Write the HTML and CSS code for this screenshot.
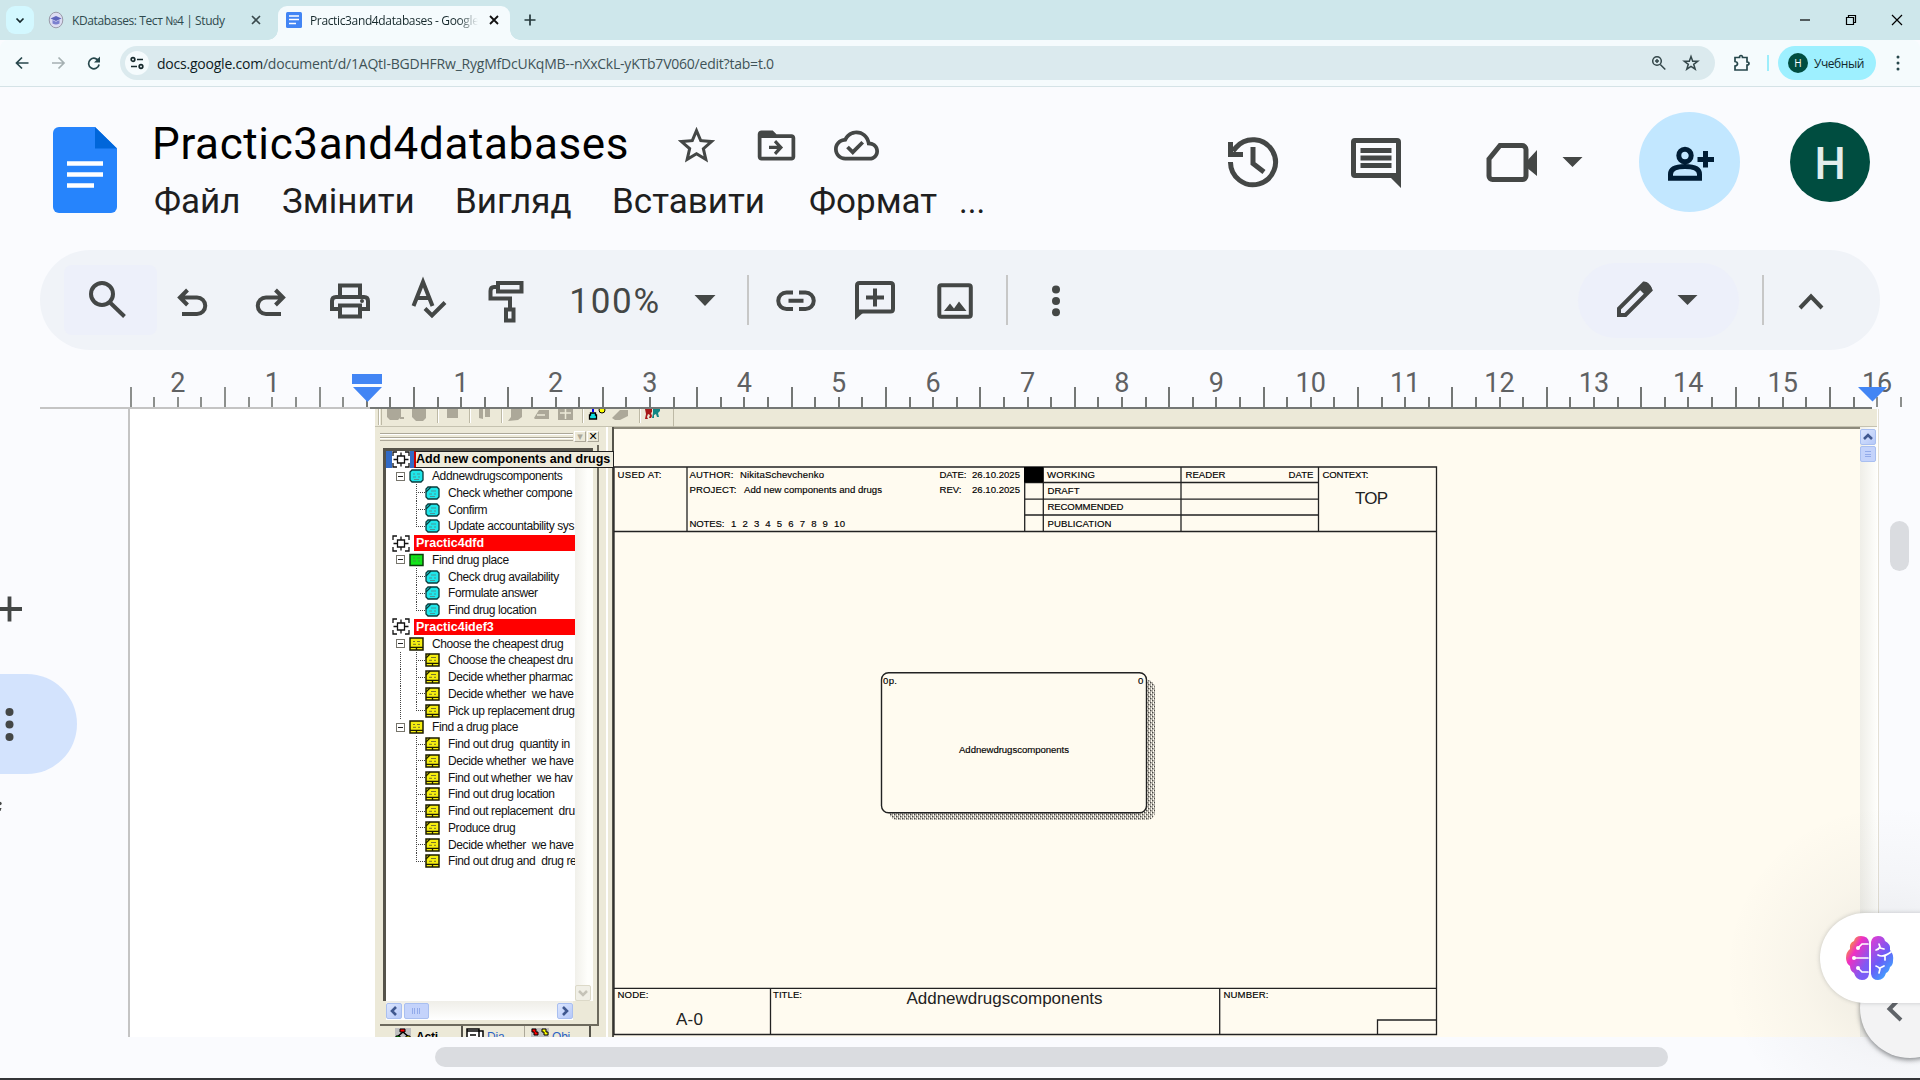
FILE: index.html
```html
<!DOCTYPE html>
<html lang="uk">
<head>
<meta charset="utf-8">
<title>Practic3and4databases - Google Документи</title>
<link rel="stylesheet" href="styles.css">
</head>
<body>
<svg class="defs" width="0" height="0">
  <symbol id="model" viewBox="0 0 18 17"><path d="M1 5V1h4M13 1h4v4M17 12v4h-4M5 16H1v-4" fill="none" stroke="#111" stroke-width="1.3"/><path d="M5.500 5h7v7h-7zM9 1.500V5M9 12v3.500M1.500 8.500h4M12.500 8.500h4" fill="#fff" stroke="#111" stroke-width="1.300"/></symbol>
  <symbol id="cyan" viewBox="0 0 15 14"><path d="M3 1h9l2 2v8l-2 2H3l-2-2V3z" fill="#1fe6ea" stroke="#0a3b3c" stroke-width="1.300"/><path d="M4 5h2M8 5h3M4 8h3M9 8h2M5 10.500h5" stroke="#4a9698" stroke-width="1"/></symbol>
  <symbol id="cyanleaf" viewBox="0 0 15 14"><path d="M3 1h9l2 2v8l-2 2H3l-2-2V3z" fill="#1fe6ea" stroke="#0a3b3c" stroke-width="1.300"/><path d="M1 6l5-5" stroke="#0a3b3c" stroke-width="1.200"/><path d="M6 5h5M4 8h3M9 8h2M5 10.500h5" stroke="#4a9698" stroke-width="1"/></symbol>
  <symbol id="green" viewBox="0 0 15 14"><path d="M1 1.500h13v11H1z" fill="#13e51a" stroke="#0b3b0b" stroke-width="1.500"/><path d="M4 5h2M8 5h3M4 8h3M9 8h2" stroke="#3c9a3c"/></symbol>
  <symbol id="yellow" viewBox="0 0 15 14"><path d="M1 1h13v12H1z" fill="#f5ee10" stroke="#1c1c00" stroke-width="1.500"/><path d="M1 10.300h13M7.500 10v3" stroke="#1c1c00" stroke-width="1.300"/><path d="M4 4.500h2M8 4.500h3M4 7.300h3M9 7.300h2" stroke="#77742c"/></symbol>
  <symbol id="yellowleaf" viewBox="0 0 15 14"><path d="M1 1h13v12H1z" fill="#f5ee10" stroke="#1c1c00" stroke-width="1.500"/><path d="M1 10.300h13M7.500 10v3M1 5l4-4" stroke="#1c1c00" stroke-width="1.300"/><path d="M6 4.500h5M4 7.300h3M9 7.300h2" stroke="#77742c"/></symbol>
</svg>

<div class="tabstrip">
  <div class="tabsearch"><svg width="28" height="28" viewBox="0 0 28 28"><path d="M10.500 12.500l3.500 3.500 3.500-3.500" class="s2 dark"/></svg></div>
  <div class="tab idle">
    <svg width="16" height="18" viewBox="0 0 16 18"><ellipse cx="8" cy="9" rx="6.800" ry="7.800" fill="#dcdcf2" stroke="#9a9aa8"/><path d="M2.500 7.500L8 5l5.500 2.500L8 10z" fill="#5d63bb"/><path d="M4.500 9v3.500q3.500 2 7 0V9L8 10.800z" fill="#7b80cf"/></svg>
    <span class="tabname">KDatabases: Тест №4 | Study</span>
    <svg class="x" width="10" height="10" viewBox="0 0 10 10"><path d="M1 1l8 8M9 1L1 9" stroke="#3a4a4d" stroke-width="1.600"/></svg>
  </div>
  <div class="tab active">
    <svg width="16" height="16" viewBox="0 0 16 16"><rect width="16" height="16" rx="1.500" fill="#4285f4"/><path d="M3 4h10M3 7.500h10M3 11.500h7" stroke="#fff" stroke-width="1.700"/></svg>
    <span class="tabname">Practic3and4databases - Google</span>
    <svg class="x" width="10" height="10" viewBox="0 0 10 10"><path d="M1 1l8 8M9 1L1 9" stroke="#111" stroke-width="1.800"/></svg>
  </div>
  <svg class="newtab" width="12" height="12" viewBox="0 0 12 12"><path d="M6 .5v11M.5 6h11" stroke="#25383b" stroke-width="1.700"/></svg>
  <div class="wincontrols">
    <svg width="12" height="12" viewBox="0 0 12 12"><path d="M1 6h10" stroke="#000" stroke-width="1.200"/></svg>
    <svg width="12" height="12" viewBox="0 0 12 12"><path d="M1.500 3.500h7v7h-7zM3.500 3.500v-2h7v7h-2" fill="none" stroke="#000" stroke-width="1.200"/></svg>
    <svg width="12" height="12" viewBox="0 0 12 12"><path d="M1 1l10 10M11 1L1 11" stroke="#000" stroke-width="1.200"/></svg>
  </div>
</div>

<div class="navbar">
  <svg width="118" height="46" viewBox="0 0 118 46"><g class="s2"><path d="M28.500 23H17M22 17.500L16.500 23l5.500 5.500" stroke="#27474c"/><path d="M52 23h11.500M58.500 17.500L64 23l-5.500 5.500" stroke="#a5b0b2"/><path d="M98.800 21.500a5.300 5.300 0 1 0 .3 3" stroke="#27474c"/></g><path d="M100 16.500v6h-6z" fill="#27474c"/></svg>
  <div class="omnibox">
    <div class="site"><svg width="24" height="24" viewBox="0 0 24 24"><g class="s2 dark"><circle cx="8" cy="8.500" r="1.800"/><path d="M12 8.500h6M6 15.500h6"/><circle cx="16" cy="15.500" r="1.800"/></g></svg></div>
    <span class="url"><b>docs.google.com</b>/document/d/1AQtI-BGDHFRw_RygMfDcUKqMB--nXxCkL-yKTb7V060/edit?tab=t.0</span>
    <svg class="obicons" width="60" height="20" viewBox="0 0 60 20"><g fill="none" stroke="#34474a" stroke-width="1.500"><circle cx="12" cy="8" r="4.300"/><path d="M15.300 11.500l5 5M10 8h4M12 6v4"/><path d="M46 3.500l1.700 4.700 5 .1-4 3 1.500 4.900-4.200-2.900-4.200 2.900 1.500-4.900-4-3 5-.1z"/></g></svg>
  </div>
  <svg class="puzzle" width="20" height="20" viewBox="0 0 20 20"><path d="M3 4.500h4.500q0-2 1.500-2t1.500 2H15v4.500q2 0 2 1.500t-2 1.500v5H3v-4q2.500-.5 2.500-2.300T3 8.500z" fill="none" stroke="#27474c" stroke-width="1.700"/></svg>
  <i class="navline"></i>
  <div class="profile"><span class="mini">Н</span>Учебный</div>
  <svg class="kebab" width="4" height="18" viewBox="0 0 4 18"><g fill="#27474c"><circle cx="2" cy="3" r="1.500"/><circle cx="2" cy="9" r="1.500"/><circle cx="2" cy="15" r="1.500"/></g></svg>
</div>

<header class="header">
  <svg class="logo" width="64" height="86" viewBox="0 0 64 86"><path d="M6 0h36l22 21.500V80a6 6 0 0 1-6 6H6a6 6 0 0 1-6-6V6a6 6 0 0 1 6-6z" fill="#2684fc"/><path d="M42 0l22 21.500H42z" fill="#0066da"/><path d="M14 36.500h36M14 47.500h36M14 58.500h27" stroke="#fff" stroke-width="4.600"/></svg>
  <div class="heading">
    <div class="titlerow">
      <span class="doctitle">Practic3and4databases</span>
      <svg width="45" height="45" viewBox="0 0 24 24"><path fill="#444746" d="M22 9.240l-7.190-.62L12 2 9.190 8.630 2 9.240l5.460 4.730L5.820 21 12 17.270 18.180 21l-1.630-7.030L22 9.240zM12 15.400l-3.760 2.270 1-4.280-3.320-2.880 4.380-.38L12 6.100l1.710 4.040 4.380.38-3.320 2.880 1 4.280L12 15.400z"/></svg>
      <svg width="45" height="45" viewBox="0 0 24 24"><path fill="#444746" d="M20 6h-8l-2-2H4c-1.100 0-2 .9-2 2v12c0 1.100.9 2 2 2h16c1.100 0 2-.9 2-2V8c0-1.100-.9-2-2-2zm0 12H4V8h16v10zm-8.200-1l3.700-4-3.700-4-1.200 1.200 1.700 1.900H8v1.800h4.300l-1.700 1.900z"/></svg>
      <svg width="45" height="45" viewBox="0 0 24 24"><path fill="#444746" d="M19.350 10.040C18.670 6.590 15.640 4 12 4 9.110 4 6.600 5.640 5.350 8.040 2.340 8.360 0 10.910 0 14c0 3.310 2.690 6 6 6h13c2.760 0 5-2.240 5-5 0-2.640-2.050-4.780-4.650-4.960zM19 18H6c-2.210 0-4-1.790-4-4 0-2.050 1.530-3.760 3.560-3.970l1.070-.11.500-.95C8.080 7.140 9.940 6 12 6c2.620 0 4.880 1.860 5.390 4.430l.3 1.500 1.530.11c1.560.1 2.780 1.410 2.780 2.960 0 1.650-1.350 3-3 3zm-9-3.820l-2.090-2.090L6.500 13.500 10 17l6.010-6.010-1.410-1.410z"/></svg>
    </div>
    <nav class="menu"><span>Файл</span><span>Змінити</span><span>Вигляд</span><span>Вставити</span><span>Формат</span><span class="more">...</span></nav>
  </div>
  <div class="actions">
    <svg width="60" height="60" viewBox="-30 -30 60 60"><g fill="none" stroke="#444746" stroke-width="5"><path d="M-22.500 0A22.500 22.500 0 1 0-17-14.500L-20-11"/><path d="M-22.500-20v12.500h12.500" /><path d="M0-15V1.500L11 10"/></g></svg>
    <svg width="60" height="60" viewBox="-30 -30 60 60"><path d="M-21-24H21a4 4 0 0 1 4 4V26L15 16H-21a4 4 0 0 1-4-4V-20a4 4 0 0 1 4-4zM-20-19V11H20V-19z" fill="#444746" fill-rule="evenodd"/><path d="M-15.500-11.500h31M-15.500-4h31M-15.500 3.500h31" stroke="#444746" stroke-width="5"/></svg>
    <svg width="120" height="60" viewBox="-60 -30 120 60"><path d="M-45-3L-34-16.500H-12a4 4 0 0 1 4 4V14a3.500 3.500 0 0 1-3.500 3.500H-41.500A3.500 3.500 0 0 1-45 14z" fill="none" stroke="#444746" stroke-width="5"/><path d="M-8 0L3-12V14L-8 5zM28.500-5h20L38.500 5z" fill="#444746"/></svg>
    <div class="share"><svg width="60" height="60" viewBox="-30 -30 60 60"><g fill="none" stroke="#001d35" stroke-width="5"><circle cx="-5" cy="-6.500" r="6.200"/><path d="M-19.500 16.200v-4q0-7.700 14.500-7.700t14.500 7.700v4z"/><path d="M15.500-11V5.500M7.500-2.500h16.500"/></g></svg></div>
    <div class="avatar">H</div>
  </div>
</header>

<div class="toolbar">
  <div class="cell search"><svg class="ic" viewBox="-25 -25 50 50"><circle cx="-6" cy="-6" r="11" /><path d="M2.500 3L16.500 16.500"/></svg></div>
  <div class="cell"><svg class="ic" viewBox="-25 -25 50 50"><path d="M-4.500-10L-12-2.500-4.500 5M-12-2.500H5a8.200 8.200 0 0 1 0 16.500H-10"/></svg></div>
  <div class="cell"><svg class="ic" viewBox="-25 -25 50 50"><path d="M4.500-10L12-2.500 4.500 5M12-2.500H-5a8.200 8.200 0 0 0 0 16.500H10"/></svg></div>
  <div class="cell"><svg class="ic" viewBox="-25 -25 50 50"><path d="M-10-4V-14.500H10V-4M-10 9H-18V1Q-18-3-14-3H14Q18-3 18 1V9H10M-10 5.500H10V16.500H-10z"/><circle cx="12" cy="1" r="2" class="solid"/></svg></div>
  <div class="cell"><svg class="ic" viewBox="-25 -25 50 50"><path d="M-15.500 6L-6-18 3.500 6M-12-2H0M-4 8.500L3 15.500 16 2.500"/></svg></div>
  <div class="cell"><svg class="ic" viewBox="-25 -25 50 50"><path d="M-8-17H15.500V-8.500H-8zM-9-13H-12Q-15.500-13-15.500-9V-1.500H4V9M0 9.500H7.500V20.500H0z"/></svg></div>
  <div class="cell zoom">100%</div>
  <div class="cell"><svg class="ic" viewBox="-25 -25 50 50"><path class="solid" d="M-10.500-5h21L0 6z"/></svg></div>
  <div class="cell"><i class="sep"></i></div>
  <div class="cell"><svg class="ic" viewBox="-25 -25 50 50"><path d="M-3-7.500H-9.500a8 8 0 0 0 0 16.500H-3M3-7.500H9.500a8 8 0 0 1 0 16.500H3M-7.500.8H7.500"/></svg></div>
  <div class="cell"><svg class="ic" viewBox="-25 -25 50 50"><path d="M-18 15V-14.500Q-18-17-15.500-17H15.500Q18-17 18-14.500V9Q18 11.500 15.500 11.500H-17M0-11.500V6.500M-9-2.500H9"/><path class="solid" d="M-20 10v10l9-8z"/></svg></div>
  <div class="cell"><svg class="ic" viewBox="-25 -25 50 50"><rect x="-15.700" y="-14.700" width="31.500" height="31.500" rx="2"/><path class="solid" d="M-11 11l6-7.500 4 5 5-7 7.500 9.500z"/></svg></div>
  <div class="cell"><i class="sep"></i></div>
  <div class="cell"><svg class="ic" viewBox="-25 -25 50 50"><g class="solid"><circle cy="-10.500" r="4"/><circle cy="1" r="4"/><circle cy="12.300" r="4"/></g></svg></div>
  <span></span>
  <div class="cell mode"><svg width="161" height="50" viewBox="1578 275 161 50"><path d="M1619 315v-6.500l25-25q3.500 0 6.500 6.500l-25 25zM1640 287l7 7" fill="none" stroke="#444746" stroke-width="4"/><path d="M1638.500 288l6-5.500q2-1 4 1l2.500 3q1.500 2 0 3.500l-5 5.500z" fill="#444746"/><path d="M1677.500 295h20l-10 10z" fill="#444746"/></svg></div>
  <div class="cell"><i class="sep"></i></div>
  <div class="cell"><svg class="ic" viewBox="-25 -25 50 50"><path d="M-11 8L0-3.500 11 8"/></svg></div>
</div>

<svg class="ruler" id="ruler" width="1920" height="59" viewBox="0 350 1920 59"></svg>

<main class="workspace">
  <aside class="outline">
    <svg width="128" height="628" viewBox="0 409 128 628"><path d="M-5 609h27M9.500 596.500v25" stroke="#444746" stroke-width="3.800"/><path d="M-10 674H27a50 50 0 0 1 0 100H-10z" fill="#d3e3fd"/><g fill="#444746"><circle cx="9.500" cy="712" r="4"/><circle cx="9.500" cy="724.500" r="4"/><circle cx="9.500" cy="737" r="4"/><circle cx="0" cy="803.500" r="1.700"/><path d="M-1 808h2.500l-1 3h-2z"/></g></svg>
  </aside>
  <section class="page">
    <div class="figure">
      <div class="xptools">
        <svg width="1502" height="18" viewBox="375 409 1502 18"><g fill="#aca899"><path d="M387 409h14v8l-3 3h-8l-3-3zM400 417h4v2h-4zM412 409h14v9l-3 3h-7l-4-4zM447 409h11v9h-11zM479 409h4v10l-4-1zM485 409h5v8h-5zM511 409h11v8l-4 3-10 1 3-4zM534 418l5-8h10v9h-14zM558 409h15v11h-15zM612 418l8-8h8v6l-8 4h-5z"/></g><path d="M560 413h11M565.500 409v10M537 415h8" stroke="#ece9d8" stroke-width="1.500"/><path d="M378.500 409v16M381.500 409v16M437.500 409v14M469.500 409v14M501.500 409v14M582.500 409v14M639.500 409v14M673.500 409v18" stroke="#bdb9a5"/><path d="M379.500 409v16M438.500 409v14M470.500 409v14M502.500 409v14M583.500 409v14M640.500 409v14" stroke="#fff"/><path d="M592 409h2v3h-2z" fill="#00f"/><path d="M590.500 413h5v2h1v4h-7v-4h1z" fill="#13dfe2" stroke="#000" stroke-width="1.300"/><circle cx="602" cy="410" r="3" fill="#ff0" stroke="#000"/><path d="M645 409h7v3l-1 1 1 3-1 2h-2l1-3-2-1-1 3 1 2h-3l1-5z" fill="#a81818"/><path d="M653 409h7v2l-2 2 1 4h-2l-1-3-2 1v3h-2l1-5z" fill="#138584"/></svg>
      </div>
      <div class="xpbody">
        <div class="dock">
          <div class="grip"><span class="lines"></span><span class="gbtn dim">▾</span><span class="gbtn">✕</span></div>
          <div class="treebox">
            <div class="treeview">
              <div class="tree">
                <div class="row l0 sel"><svg class="m"><use href="#model"/></svg></div>
                <div class="row l1"><i class="ex"></i><svg><use href="#cyan"/></svg><span>Addnewdrugscomponents</span></div>
                <div class="row l2"><i class="g"></i><svg><use href="#cyanleaf"/></svg><span>Check whether compone</span></div>
                <div class="row l2"><i class="g"></i><svg><use href="#cyanleaf"/></svg><span>Confirm</span></div>
                <div class="row l2"><i class="g end"></i><svg><use href="#cyanleaf"/></svg><span>Update accountability sys</span></div>
                <div class="row l0"><svg class="m"><use href="#model"/></svg><b>Practic4dfd</b></div>
                <div class="row l1"><i class="ex"></i><svg><use href="#green"/></svg><span>Find drug place</span></div>
                <div class="row l2"><i class="g"></i><svg><use href="#cyanleaf"/></svg><span>Check drug availability</span></div>
                <div class="row l2"><i class="g"></i><svg><use href="#cyanleaf"/></svg><span>Formulate answer</span></div>
                <div class="row l2"><i class="g end"></i><svg><use href="#cyanleaf"/></svg><span>Find drug location</span></div>
                <div class="row l0"><svg class="m"><use href="#model"/></svg><b>Practic4idef3</b></div>
                <div class="row l1"><i class="ex"></i><svg><use href="#yellow"/></svg><span>Choose the cheapest drug</span></div>
                <div class="row l2 trunk"><i class="g"></i><svg><use href="#yellowleaf"/></svg><span>Choose the cheapest dru</span></div>
                <div class="row l2 trunk"><i class="g"></i><svg><use href="#yellowleaf"/></svg><span>Decide whether pharmac</span></div>
                <div class="row l2 trunk"><i class="g"></i><svg><use href="#yellowleaf"/></svg><span>Decide whether&nbsp; we have</span></div>
                <div class="row l2 trunk"><i class="g end"></i><svg><use href="#yellowleaf"/></svg><span>Pick up replacement drug</span></div>
                <div class="row l1"><i class="ex"></i><svg><use href="#yellow"/></svg><span>Find a drug place</span></div>
                <div class="row l2"><i class="g"></i><svg><use href="#yellowleaf"/></svg><span>Find out drug&nbsp; quantity in</span></div>
                <div class="row l2"><i class="g"></i><svg><use href="#yellowleaf"/></svg><span>Decide whether&nbsp; we have</span></div>
                <div class="row l2"><i class="g"></i><svg><use href="#yellowleaf"/></svg><span>Find out whether&nbsp; we hav</span></div>
                <div class="row l2"><i class="g"></i><svg><use href="#yellowleaf"/></svg><span>Find out drug location</span></div>
                <div class="row l2"><i class="g"></i><svg><use href="#yellowleaf"/></svg><span>Find out replacement&nbsp; dru</span></div>
                <div class="row l2"><i class="g"></i><svg><use href="#yellowleaf"/></svg><span>Produce drug</span></div>
                <div class="row l2"><i class="g"></i><svg><use href="#yellowleaf"/></svg><span>Decide whether&nbsp; we have</span></div>
                <div class="row l2"><i class="g end"></i><svg><use href="#yellowleaf"/></svg><span>Find out drug and&nbsp; drug re</span></div>
              </div>
              <div class="vscroll"><span class="sbtn off"><svg width="14" height="14" viewBox="0 0 14 14"><path d="M3 5l4 4 4-4" fill="none" stroke="#c5c3b8" stroke-width="2.500"/></svg></span></div>
            </div>
            <div class="hscroll">
              <span class="sbtn"><svg width="14" height="14" viewBox="0 0 14 14"><path d="M9 3L5 7l4 4" class="chev"/></svg></span>
              <span class="hthumb"></span>
              <span class="sbtn right"><svg width="14" height="14" viewBox="0 0 14 14"><path d="M5 3l4 4-4 4" class="chev"/></svg></span>
            </div>
          </div>
          <div class="docktabs">
            <div class="dtab on"><svg width="18" height="11" viewBox="0 0 18 11"><path d="M0 0h16v11H0z" fill="#c0c0c0"/><path d="M8 4L2 9M8 4l6 5" stroke="#000" stroke-width="1.500"/><path d="M5 1h5v3H5z" fill="#f00" stroke="#000"/><path d="M1 8h4v3H1z" fill="#0d0" stroke="#000"/><path d="M11 8h4v3h-4z" fill="#ff0" stroke="#000"/></svg>Acti</div>
            <div class="dtab"><svg width="18" height="11" viewBox="0 0 18 11"><path d="M1 1h12v10H1zM13 3h4v7h-4M1 3h12M4 7h6" fill="#fff" stroke="#000" stroke-width="1.500"/></svg>Dia</div>
            <div class="dtab"><svg width="18" height="11" viewBox="0 0 18 11"><path d="M0 0h18v9H0z" fill="#c0c0c0"/><path d="M1 1h4v3h2v3H3V4H1z" fill="#f00" stroke="#000"/><path d="M11 1h4v3h2v3h-4V4h-2z" fill="#ff0" stroke="#000"/></svg>Obj</div>
          </div>
          <div class="tip">Add new components and drugs</div>
        </div>
        <svg class="diagram" width="1248" height="610" viewBox="612 427 1248 610">
          <defs><pattern id="dither" width="4" height="4" patternUnits="userSpaceOnUse"><rect width="4" height="4" fill="#fffbf0"/><path d="M0 0h1.500v1.500H0zM2 2h1.500v1.500H2zM2 .5h1v1H2zM0 2.500h1v1H0z" fill="#4a4844"/></pattern></defs>
          <rect x="612" y="427" width="1248" height="610" fill="#fffbf0"/>
          <path d="M612 428h1248" stroke="#8d8a7c" stroke-width="2"/><path d="M613 427v610" stroke="#55534a" stroke-width="2"/>
          <g fill="none" stroke="#222" stroke-width="1.300">
            <path d="M614 467H1436.500V1034.500H614zM614 531.500H1436.500M687 467V531.500M1024.700 467V531.500M1043.300 467V531.500M1181 467V531.500M1318.500 467V531.500M1024.700 482.500H1318.500M1024.700 499.200H1318.500M1024.700 515H1318.500M614 988.300H1436.500M770.500 988.300V1034.500M1219.700 988.300V1034.500M1377.500 1034.500V1020H1436.500"/>
          </g>
          <rect x="1024" y="467" width="19" height="15.500"/>
          <rect x="889" y="680" width="266" height="140" rx="8" fill="url(#dither)"/>
          <rect x="881.500" y="672.800" width="265" height="140" rx="7" fill="#fffbf0" stroke="#222" stroke-width="1.400"/>
          <g class="dt">
            <text x="617.500" y="478" textLength="44">USED AT:</text>
            <text x="689.500" y="478" textLength="44">AUTHOR:</text><text x="740" y="478" textLength="84">NikitaSchevchenko</text>
            <text x="689.500" y="492.700" textLength="47">PROJECT:</text><text x="744" y="492.700" textLength="138">Add new components and drugs</text>
            <text x="689.500" y="527" textLength="35">NOTES:</text><text x="731" y="527" textLength="114" xml:space="preserve">1  2  3  4  5  6  7  8  9  10</text>
            <text x="939.500" y="478" textLength="27">DATE:</text><text x="972" y="478" textLength="48">26.10.2025</text>
            <text x="939.500" y="492.700" textLength="22">REV:</text><text x="972" y="492.700" textLength="48">26.10.2025</text>
            <text x="1047" y="478" textLength="48">WORKING</text><text x="1047.500" y="493.500" textLength="32">DRAFT</text><text x="1047.500" y="510" textLength="76">RECOMMENDED</text><text x="1047.500" y="527" textLength="64">PUBLICATION</text>
            <text x="1185.500" y="478" textLength="40">READER</text><text x="1288.500" y="478" textLength="25">DATE</text><text x="1322.500" y="478" textLength="46">CONTEXT:</text>
            <text x="617.500" y="997.500" textLength="31">NODE:</text><text x="773" y="997.500" textLength="29">TITLE:</text><text x="1223.500" y="997.500" textLength="45">NUMBER:</text>
            <text x="883" y="684" textLength="14">0p.</text><text x="1138" y="684">0</text>
            <text x="959" y="752.500" textLength="110">Addnewdrugscomponents</text>
          </g>
          <g class="big"><text x="1355" y="504" textLength="33">TOP</text><text x="676" y="1024.500" textLength="27">A-0</text><text x="906.500" y="1003.500" textLength="196">Addnewdrugscomponents</text></g>
        </svg>
        <div class="mainscroll">
          <span class="sbtn"><svg width="14" height="14" viewBox="0 0 14 14"><path d="M3 9l4-4 4 4" class="chev"/></svg></span>
          <span class="sbtn lines3"></span>
        </div>
      </div>
    </div>
  </section>
  <div class="gutter"><span class="thumb"></span></div>
</main>
<footer class="bottom"><span class="hbar"></span></footer>

<div class="haze"></div>
<div class="sidetoggle"><svg width="60" height="100" viewBox="1860 960 60 100"><path d="M1901 999l-11.500 12 11.500 11" fill="none" stroke="#5f6368" stroke-width="4"/></svg></div>
<div class="assistant">
  <svg width="48" height="46" viewBox="0 0 48 46">
    <defs><linearGradient id="bl" x1="0" y1="0" x2=".9" y2="1"><stop offset=".12" stop-color="#f9a825"/><stop offset=".38" stop-color="#f02fc2"/><stop offset=".8" stop-color="#7b5cf5"/></linearGradient><linearGradient id="br" x1=".2" y1="0" x2=".8" y2="1"><stop offset="0" stop-color="#d63fd6"/><stop offset=".5" stop-color="#6a5cf8"/><stop offset="1" stop-color="#35b4ff"/></linearGradient></defs>
    <path d="M23 7Q22 1 15 1 9 1 8 6 3 8 4 14 0 17 0 23 0 28 4 31 4 36 8 38 10 45 16 45 22 45 23 39z" fill="url(#bl)"/>
    <path d="M25 7Q26 1 32 1 38 1 39 6 45 9 44 15 48 19 47 26 47 30 44 32 43 37 40 38 38 45 32 45 26 45 25 39z" fill="url(#br)"/>
    <g fill="none" stroke="#fff" stroke-width="1.700" stroke-linecap="round"><path d="M22 9h-6l-4 4M22 23H8M22 37h-6l-4-4M30 15q3-1 4-3l-1-3M34 13l4 1M32 20q5 3 13-3M39 21v4M30 31q3 1 4 3l-1 4M34 33l4-2"/></g>
    <g fill="#fff"><circle cx="12" cy="13" r="2"/><circle cx="8" cy="23" r="2"/><circle cx="12" cy="33" r="2"/></g>
  </svg>
</div>
<script src="ruler.js"></script>
</body>
</html>
```

FILE: styles.css
```css
* { box-sizing: border-box; }
html, body { margin: 0; width: 1920px; height: 1080px; overflow: hidden; }
body { display: flex; flex-direction: column; background: #fafbfe; font-family: Roboto, "Liberation Sans", sans-serif; position: relative; }
svg { display: block; flex: none; }
.defs { position: absolute; }
.s2 { fill: none; stroke-width: 1.7; }
.dark { stroke: #16292c; }

/* browser chrome */
.tabstrip { height: 40px; flex: none; display: flex; background: #cee7eb; padding: 6px 0 0 6px; font-family: "Open Sans", "Noto Sans", sans-serif; font-size: 12px; }
.tabsearch { width: 28px; height: 28px; border-radius: 9px; background: #d3f8ff; }
.tab { display: flex; align-items: center; height: 28px; }
.tab .tabname { white-space: nowrap; overflow: hidden; }
.idle { padding-left: 14px; width: 244px; color: #2f4a4e; }
.idle .tabname { width: 179px; margin-left: 8px; letter-spacing: -.4px; }
.active { width: 232px; height: 34px; padding: 0 0 6px 8px; background: #f5fbfd; border-radius: 9px 9px 0 0; color: #16292c; position: relative; }
.active::before, .active::after { content: ""; position: absolute; bottom: 0; width: 10px; height: 10px; }
.active::before { left: -10px; background: radial-gradient(circle at 0 0, transparent 9.5px, #f5fbfd 10px); }
.active::after { right: -10px; background: radial-gradient(circle at 100% 0, transparent 9.5px, #f5fbfd 10px); }
.active .tabname { width: 169px; margin: 0 10px 0 8px; letter-spacing: -.36px; -webkit-mask: linear-gradient(90deg, #000 148px, transparent 168px); mask: linear-gradient(90deg, #000 148px, transparent 168px); }
.newtab { margin: 8px 0 0 14px; }
.wincontrols { display: flex; gap: 34px; margin: 8px 17px 0 auto; }

.navbar { height: 47px; flex: none; display: flex; align-items: flex-start; background: #f5fbfd; border-bottom: 1px solid #d5e3e7; border-radius: 8px 8px 0 0; }
.omnibox { margin: 6px 0 0 2px; width: 1595px; height: 34px; border-radius: 17px; background: #dbeaee; display: flex; align-items: center; padding-left: 5px; font-family: "Open Sans", "Noto Sans", sans-serif; }
.site { width: 24px; height: 24px; border-radius: 50%; background: #f5fbfd; }
.url { margin-left: 8px; font-size: 14px; letter-spacing: -.22px; color: #3f5357; white-space: nowrap; }
.url b { font-weight: 400; color: #0d1b1e; }
.obicons { margin: 0 10px 0 auto; }
.puzzle { margin: 13px 0 0 17px; }
.navline { width: 2px; height: 16px; margin: 15px 0 0 15px; background: #9eeefb; }
.profile { margin: 6px 0 0 9px; width: 98px; height: 34px; border-radius: 17px; background: #9ef0ff; display: flex; align-items: center; font: 12px "Open Sans", sans-serif; letter-spacing: -.45px; color: #10292e; padding-left: 10px; }
.mini { width: 20px; height: 20px; border-radius: 50%; background: #004d40; color: #fff; font-size: 10px; display: grid; place-items: center; margin-right: 6px; letter-spacing: 0; }
.kebab { margin: 14px 0 0 20px; }

/* document header */
.header { height: 163px; flex: none; display: flex; padding-left: 53px; }
.logo { margin-top: 40px; }
.heading { width: 1083px; padding: 31px 0 0 37px; }
.titlerow { display: flex; align-items: flex-start; height: 62px; }
.doctitle { width: 522px; margin-left: -2px; font-size: 44px; line-height: 52px; letter-spacing: .63px; color: #000; white-space: nowrap; }
.titlerow svg { margin-top: 4.5px; margin-right: 35px; }
.menu { display: grid; grid-template-columns: 128px 173px 157px 197px 150px auto; font-size: 35px; line-height: 44px; color: #1f1f1f; white-space: nowrap; justify-content: start; }
.menu .more { font-size: 33px; line-height: 43px; }
.actions { display: grid; grid-template-columns: 106px 139px 177px 135px 146px; height: 150px; align-items: center; justify-items: center; }
.share { width: 101px; height: 100px; border-radius: 50%; background: #c2e7ff; display: grid; place-items: center; }
.avatar { width: 80px; height: 80px; border-radius: 50%; background: #004d40; color: #e3eeec; font-size: 44px; font-weight: 500; padding-top: 3px; display: grid; place-items: center; }

.toolbar { height: 100px; flex: none; width: 1840px; margin-left: 40px; padding-left: 24px; border-radius: 50px; background: #f0f3f8; display: grid; grid-template-columns: 93px 70px 88px 70px 88px 65px 154px 25px 62px 34px 124px 35px 70px 28px 1fr 161px 48px 48px 45px; align-items: center; }
.cell { display: flex; justify-content: center; align-items: center; }
.ic { width: 50px; height: 50px; fill: none; stroke: #444746; stroke-width: 4; }
.ic .solid { fill: #444746; stroke: none; }
.search { height: 70px; background: #edf0fa; border-radius: 8px; padding-right: 5px; }
.zoom { font-size: 35px; color: #444746; letter-spacing: 1.7px; padding-top: 3px; }
.sep { width: 2px; height: 50px; background: #c7c7c7; }
.mode { height: 75px; border-radius: 38px; background: #edf0fa; }
.ruler { font: 27px Roboto, sans-serif; }

/* document canvas */
.workspace { height: 628px; flex: none; display: flex; }
.outline { width: 128px; }
.page { width: 1751px; border-left: 2px solid #c4c4c4; border-right: 1px solid #e4e0d4; background: #fff; padding-left: 245px; }
.gutter { width: 41px; padding: 112px 0 0 11px; }
.thumb { display: block; width: 19px; height: 50px; border-radius: 10px; background: #dadce0; }
.bottom { height: 43px; flex: none; border-bottom: 2px solid #343538; padding: 10px 0 0 435px; }
.hbar { display: block; width: 1233px; height: 20px; border-radius: 10px; background: #dadce0; }

/* embedded modelling tool */
.figure { width: 1502px; height: 628px; overflow: hidden; background: #ece9d8; display: flex; flex-direction: column; }
.xptools { height: 18px; border-bottom: 1px solid #c5c2b0; }
.xpbody { height: 610px; display: flex; }
.dock { width: 237px; flex: none; padding: 4px 0 0 5px; position: relative; background: linear-gradient(90deg, #ece9d8 231px, #fff 231px 233px, #ece9d8 233px); }
.grip { height: 13px; display: flex; align-items: flex-start; gap: 1px; }
.lines { width: 193px; height: 8px; margin-top: 2px; border: solid #aca899; border-width: 1px 0; background: linear-gradient(#fff 1px, transparent 1px 3px, #aca899 3px 4px, #fff 4px 5px, transparent 5px); }
.gbtn { width: 12px; height: 11px; background: #ece9d8; border: 1px solid #aca899; border-top-color: #fff; border-left-color: #fff; font: bold 11px/9px "DejaVu Sans", sans-serif; text-align: center; display: grid; place-items: center; }
.gbtn.dim { color: #aca899; }
.treebox { width: 219px; height: 581px; margin-top: 1px; border: solid #6d6a5e; border-width: 0 2px 2px 0; padding: 3px 4px 3px 3px; }
.treeview { height: 553px; display: flex; border: solid #55534a; border-width: 3px 0 0 3px; }
.tree { width: 189px; flex: none; height: 550px; background: #fff; overflow: hidden; }
.row { height: 16.75px; display: flex; align-items: center; font: 12px/16px "Liberation Sans", Arial, sans-serif; letter-spacing: -.4px; color: #111; white-space: nowrap; }
.row > * { flex: none; }
.row svg { width: 15px; height: 14px; }
.row svg.m { width: 18px; height: 17px; }
.l0 { padding-left: 6px; }
.l0 .m + b { flex: 1; margin-left: 4px; padding-left: 2px; background: #f00; color: #fff; font-size: 12.5px; letter-spacing: 0; }
.sel { background: linear-gradient(90deg, #316ac5 6px, #fff 6px 24px, #316ac5 24px 28px, #fff 28px); }
.l1 { padding-left: 10px; }
.l1 span, .l2 span { margin-left: 8px; }
.ex { width: 9px; height: 9px; margin-right: 4px; border: 1px solid #77756c; background: linear-gradient(#fff 3px, #222 3px 4px, #fff 4px); background-clip: content-box; padding: 0 1px; }
.l2 { padding-left: 30px; }
.g { width: 9px; height: 17px; background: repeating-linear-gradient(90deg, #444 0 1px, transparent 1px 2px) 0 8px / 100% 1px no-repeat, repeating-linear-gradient(#444 0 1px, transparent 1px 2px) 0 0 / 1px 100% no-repeat; }
.g.end { align-self: flex-start; height: 9px; }
.l2 .g.end { background: repeating-linear-gradient(90deg, #444 0 1px, transparent 1px 2px) 0 8px / 100% 1px no-repeat, repeating-linear-gradient(#444 0 1px, transparent 1px 2px) 0 0 / 1px 100% no-repeat; }
.trunk { background: repeating-linear-gradient(#444 0 1px, transparent 1px 2px) 14px 0 / 1px 100% no-repeat; }
.vscroll { width: 18px; flex: none; background: linear-gradient(90deg, #f1f0ea, #fefefb 70%); display: flex; align-items: flex-end; }
.sbtn { width: 16px; height: 16px; border-radius: 2px; background: linear-gradient(135deg, #dce6fe, #b5c8f8); border: 1px solid #a9bff0; display: grid; place-items: center; overflow: hidden; flex: none; }
.sbtn.off { background: #f0efe6; border-color: #dcd9c8; }
.chev { fill: none; stroke: #40588f; stroke-width: 2.6; }
.hscroll { height: 19px; width: 187px; margin-left: 3px; padding: 2px 0 1px; background: linear-gradient(#efeee8, #fff); display: flex; }
.hthumb { width: 25px; height: 16px; margin-left: 2px; border-radius: 2px; border: 1px solid #a9bff0; background: repeating-linear-gradient(90deg, #93abea 0 1px, transparent 1px 2.5px) 7px 4px / 9px 6px no-repeat, #c4d3fb; }
.right { margin-left: auto; }
.docktabs { display: flex; height: 14px; padding-left: 10px; font: 12px/18px "Liberation Sans", sans-serif; color: #2a62c4; }
.dtab { width: 62px; height: 30px; padding: 2px 0 0 3px; display: flex; gap: 3px; border-right: 1px solid #aca899; white-space: nowrap; letter-spacing: -.2px; }
.dtab:last-child { border-right: 2px solid #55534a; width: 66px; padding-left: 6px; }
.dtab.on { width: 73px; color: #000; font-weight: bold; border-right: 2px solid #55534a; padding-left: 5px; }
.tip { position: absolute; left: 39px; top: 24px; width: 200px; height: 17px; border: 1px solid #222; border-left: 2px solid #c00; background: #eeebdc; font: bold 12.5px/15px "Liberation Sans", sans-serif; letter-spacing: .02px; white-space: nowrap; z-index: 2; }
.dt { font: 9.6px "Liberation Sans", sans-serif; fill: #000; stroke: #000; stroke-width: .15px; }
.big { font: 17px "Liberation Sans", sans-serif; fill: #222; }
.mainscroll { width: 17px; background: linear-gradient(90deg, #efeee8, #fefefb); padding-top: 2px; display: flex; flex-direction: column; gap: 1px; }
.lines3 { background: repeating-linear-gradient(#93abea 0 1px, transparent 1px 2.5px) 4px 4px / 6px 7px no-repeat, #c4d3fb; }

/* floating controls */
.haze { position: absolute; right: 0; top: 800px; width: 240px; height: 278px; background: radial-gradient(circle at 210px 170px, rgba(60,64,67,.1), rgba(60,64,67,.03) 90px, transparent 165px); }
.sidetoggle { position: absolute; left: 1860px; top: 958px; width: 100px; height: 100px; border-radius: 50px; background: #f3f3f4; box-shadow: 0 2px 5px rgba(60,64,67,.6); }
.assistant { position: absolute; left: 1820px; top: 913px; width: 110px; height: 90px; border-radius: 45px 0 0 45px; background: #fff; box-shadow: 0 0 4px rgba(60,64,67,.25); padding: 22px 0 0 26px; }
```

FILE: ruler.js
```js
const ZERO = 366.7, CM = 94.4;
let out = '<path d="M40 408h330" stroke="#c4c4c4" stroke-width="2"/><path d="M370 408h1502" stroke="#747775" stroke-width="2"/>';
for (let q = -10; q <= 65; q++) {
  const x = Math.round(ZERO + q * CM / 4);
  const top = Math.abs(q % 4) === 2 ? 387 : 397;
  const color = q < 0 || q > 63 ? '#8c8f8d' : '#747775';
  out += `<rect x="${x - 1}" y="${top}" width="2" height="${407 - top}" fill="${color}"/>`;
}
for (let n = -2; n <= 16; n++) {
  if (n) out += `<text x="${ZERO + n * CM}" y="391.500" text-anchor="middle" fill="#5f6163">${Math.abs(n)}</text>`;
}
out += '<path d="M352 374h30v10h-30zM353 387h29l-14.500 15zM1858 387h29l-14.500 14.500z" fill="#4285f4"/>';
document.getElementById('ruler').innerHTML = out;
```
